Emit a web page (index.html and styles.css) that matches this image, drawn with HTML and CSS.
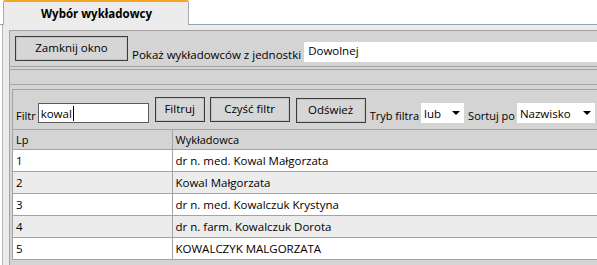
FILE: index.html
```html
<!DOCTYPE html>
<html lang="pl">
<head>
  <meta charset="UTF-8">
  <title>Wybór wykładowcy</title>
  <link rel="stylesheet" href="styles.css">
</head>
<body>
  <div class="tabs">
    <div class="tab-gap"></div>
    <div class="tab">Wybór wykładowcy</div>
    <div class="tab-fill"></div>
  </div>

  <div class="panel">
    <div class="inner">
      <div class="toolbar">
        <button class="btn btn-close">Zamknij okno</button>
        <span class="label">Pokaż wykładowców z jednostki</span>
        <div class="field field-unit">Dowolnej</div>
      </div>

      <div class="bar"></div>

      <div class="list">
        <div class="filters">
          <span class="label label-filter">Filtr</span>
          <div class="field field-filter">kowal<span class="caret"></span></div>
          <button class="btn btn-filter">Filtruj</button>
          <button class="btn btn-clear">Czyść filtr</button>
          <button class="btn btn-refresh">Odśwież</button>
          <span class="label">Tryb filtra</span>
          <div class="select select-mode">
            <span>lub</span>
            <svg width="8" height="4" viewBox="0 0 8 4"><path d="M0 0h8L4 4z" fill="#000"/></svg>
          </div>
          <span class="label">Sortuj po</span>
          <div class="select select-sort">
            <span>Nazwisko</span>
            <svg width="8" height="4" viewBox="0 0 8 4"><path d="M0 0h8L4 4z" fill="#000"/></svg>
          </div>
        </div>

        <table class="grid">
          <thead>
            <tr><th class="col-lp">Lp</th><th>Wykładowca</th></tr>
          </thead>
          <tbody>
            <tr><td>1</td><td>dr n. med. Kowal Małgorzata</td></tr>
            <tr><td>2</td><td>Kowal Małgorzata</td></tr>
            <tr><td>3</td><td>dr n. med. Kowalczuk Krystyna</td></tr>
            <tr><td>4</td><td>dr n. farm. Kowalczuk Dorota</td></tr>
            <tr><td>5</td><td>KOWALCZYK MALGORZATA</td></tr>
          </tbody>
        </table>
      </div>
    </div>
  </div>
</body>
</html>
```

FILE: styles.css
```css
* {
  margin: 0;
  padding: 0;
  box-sizing: border-box;
}

body {
  background: #fff;
  font-family: 'Open Sans', 'Noto Sans', sans-serif;
  font-size: 11px;
  color: #000;
  overflow: hidden;
  width: 597px;
  height: 265px;
}

.tabs {
  display: flex;
  height: 25px;
}

.tab-gap {
  width: 3px;
  border-bottom: 1px solid #8ea6bd;
}

.tab {
  width: 186px;
  height: 25px;
  background: #ececec;
  border-top: 2px solid #f5a623;
  border-left: 1px solid #a9a9a9;
  border-right: 1px solid #a9a9a9;
  border-radius: 2px 2px 0 0;
  font-weight: bold;
  font-size: 11.5px;
  padding-left: 37px;
  padding-top: 4px;
}

.tab-fill {
  flex: 1;
  border-bottom: 1px solid #8ea6bd;
}

.panel {
  margin-left: 2px;
  border-left: 1px solid #b4b4b4;
  background: #ececec;
  padding: 5px 0 0 6px;
  height: 240px;
}

.inner {
  background: #d4d4d4;
  border-left: 1px solid #a3a3a3;
  height: 100%;
}

.toolbar {
  display: flex;
  align-items: flex-end;
  border-top: 1px solid #a3a3a3;
  border-bottom: 1px solid #a3a3a3;
  padding: 5px 0 4px 5px;
  height: 37px;
}

.label {
  white-space: nowrap;
  line-height: 14px;
}

.toolbar .label {
  font-size: 11.5px;
  margin: 0 3px 0 4px;
}

.btn {
  font-family: inherit;
  font-size: 11.5px;
  background: #d6d6d6;
  border: 1px solid #3c3c3c;
  box-shadow: inset 0 0 0 1px #c4c4c4;
  color: #000;
  height: 25px;
  padding-bottom: 2px;
}

.btn-close {
  width: 113px;
  margin-bottom: 1px;
}

.field {
  background: #fff;
  height: 20px;
  line-height: 18px;
  padding-left: 4px;
}

.field-unit {
  flex: 1;
  font-size: 11.5px;
}

.bar {
  margin-top: 2px;
  height: 16px;
  border-top: 1px solid #a3a3a3;
  border-bottom: 1px solid #a3a3a3;
}

.list {
  margin: 4px 0 0 2px;
  border-top: 1px solid #a3a3a3;
  border-left: 1px solid #a3a3a3;
}

.filters {
  display: flex;
  align-items: flex-end;
  height: 39px;
  padding: 0 0 6px 3px;
}

.label-filter {
  margin-right: 1px;
}

.field-filter {
  width: 111px;
  border: 1px solid #5a5a5a;
  line-height: 17px;
  padding-left: 2px;
  font-size: 11.5px;
  display: flex;
  align-items: center;
}

.caret {
  width: 1px;
  height: 15px;
  background: #000;
  margin-left: 1px;
}

.btn-filter {
  width: 50px;
  margin-left: 6px;
  margin-bottom: 1px;
}

.btn-clear {
  width: 80px;
  margin-left: 5px;
  margin-bottom: 1px;
}

.btn-refresh {
  width: 70px;
  margin-left: 6px;
}

.filters .label {
  margin-left: 4px;
  margin-right: 2px;
}

.filters .label-filter {
  margin-left: 0;
}

.select {
  display: flex;
  align-items: center;
  justify-content: space-between;
  background: #fff;
  height: 20px;
  padding: 0 4px 0 3px;
  font-size: 11.5px;
}

.select-mode {
  width: 43px;
}

.select-sort {
  width: 78px;
}

.grid {
  width: 100%;
  border-collapse: collapse;
}

.grid th,
.grid td {
  text-align: left;
  font-weight: normal;
  padding: 0 3px;
  border-top: 1px solid #a3a3a3;
  white-space: nowrap;
}

.grid th {
  height: 20px;
  background: #d4d4d4;
}

.grid td {
  height: 22px;
  background: #fff;
  font-size: 11.5px;
}

.grid tbody tr:nth-child(even) td {
  background: #ececec;
}

.grid tbody tr:last-child td {
  border-bottom: 1px solid #a3a3a3;
}

.grid .col-lp,
.grid td:first-child {
  width: 159px;
  border-right: 1px solid #a3a3a3;
}
```
